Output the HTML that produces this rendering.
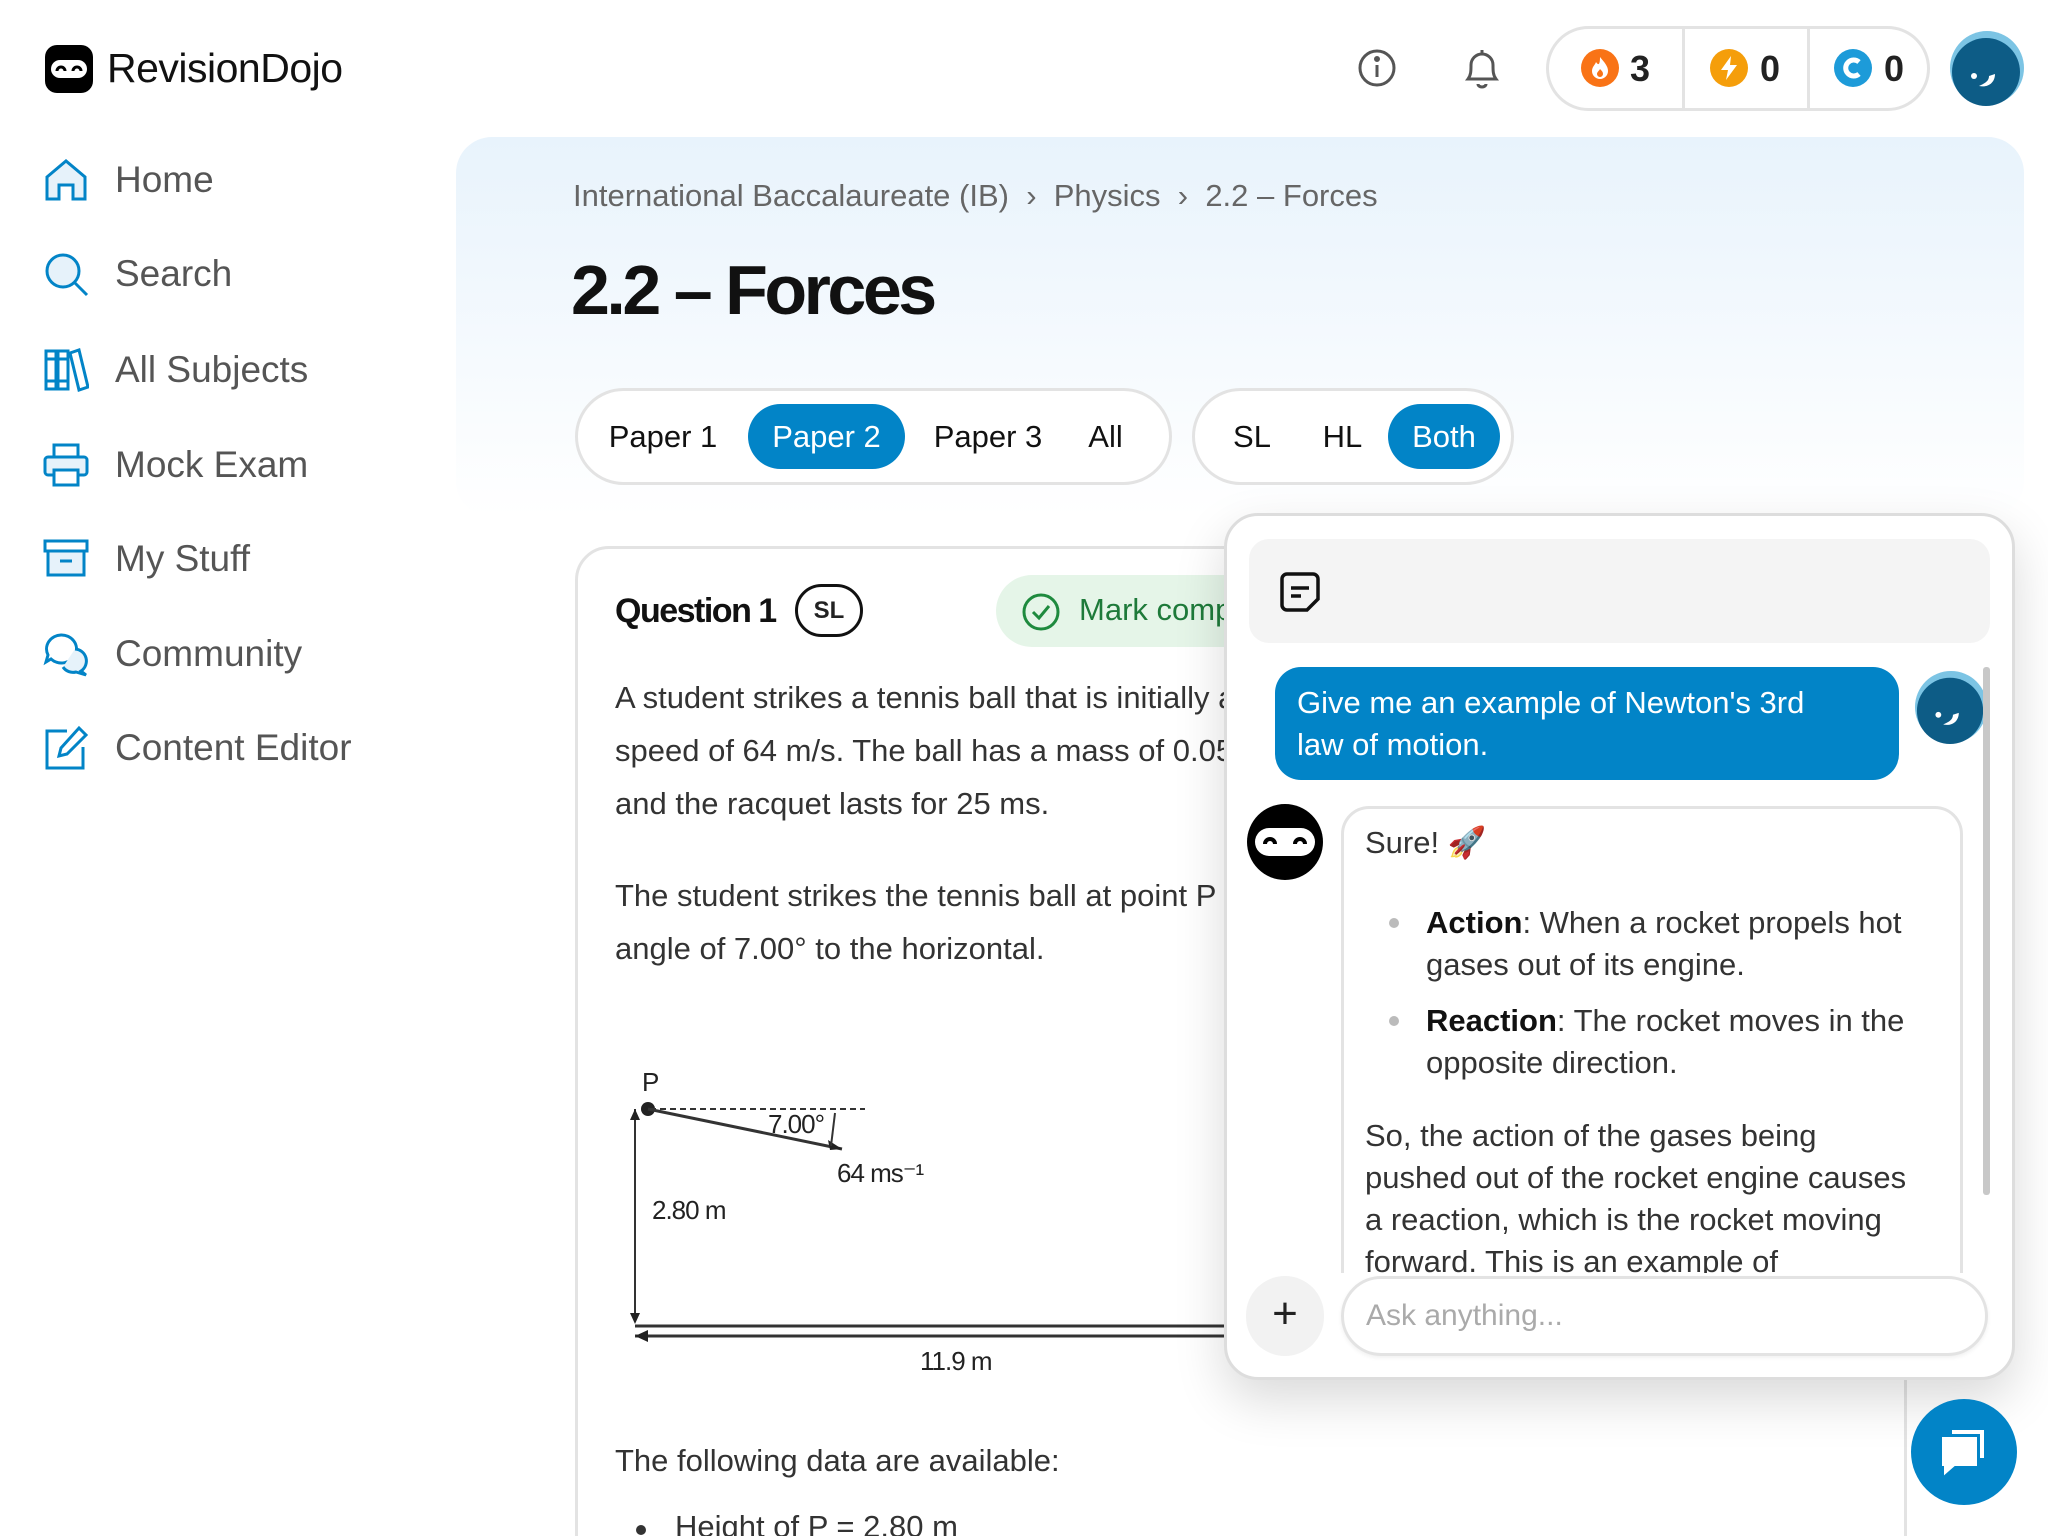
<!DOCTYPE html>
<html><head><meta charset="utf-8"><style>
*{box-sizing:border-box;margin:0;padding:0}
html,body{width:2048px;height:1536px;overflow:hidden;background:#fff}
body{font-family:"Liberation Sans",sans-serif;color:#222}
#w{position:relative;width:2048px;height:1536px;overflow:hidden}
.a{position:absolute}
.nav{position:absolute;left:43px;display:flex;align-items:center;font-size:37px;color:#555}
.nav svg{width:46px;height:46px;margin-right:26px}
.pill{position:absolute;border:3px solid #e3e3e3;border-radius:60px;background:#fff}
.opt{position:absolute;top:13px;height:65px;line-height:65px;font-size:31px;color:#111;text-align:center;border-radius:40px}
.on{background:#0284c7;color:#fff}
.p{position:absolute;left:615px;font-size:31px;color:#333;line-height:53px;white-space:nowrap}
.ct{position:absolute;left:1365px;font-size:31px;color:#333;line-height:42px;white-space:nowrap}
</style></head><body><div id="w">
<svg class="a" style="left:45px;top:45px" width="48" height="48" viewBox="0 0 48 48"><rect x="0" y="0" width="48" height="48" rx="12" fill="#000"/><rect x="6" y="15" width="36" height="18" rx="9" fill="#fff"/><path d="M12 26 a4 4 0 0 1 8 0 M28 26 a4 4 0 0 1 8 0" stroke="#000" stroke-width="3" fill="none"/></svg>
<div class="a" style="left:107px;top:45px;font-size:41px;color:#111;letter-spacing:-0.5px">RevisionDojo</div>
<div class="nav" style="top:157px"><svg viewBox="0 0 46 46" fill="none" stroke="#0284c7" stroke-width="3"><path d="M4 20 L23 4 L42 20 V42 H30 V28 H16 V42 H4Z" fill="#e6f2fa"/></svg>Home</div>
<div class="nav" style="top:251px"><svg viewBox="0 0 46 46" fill="none" stroke="#0284c7" stroke-width="3"><circle cx="20" cy="20" r="16" fill="#e6f2fa"/><path d="M32 32 L44 44"/></svg>Search</div>
<div class="nav" style="top:347px"><svg viewBox="0 0 46 46" fill="none" stroke="#0284c7" stroke-width="3"><rect x="3" y="4" width="10" height="38"/><rect x="15" y="4" width="10" height="38"/><path d="M27 6 L36 3 L45 40 L36 43Z"/><path d="M3 12H13M15 12H25M3 34H13M15 34H25"/></svg>All Subjects</div>
<div class="nav" style="top:442px"><svg viewBox="0 0 46 46" fill="none" stroke="#0284c7" stroke-width="3"><rect x="11" y="3" width="24" height="12"/><rect x="2" y="15" width="42" height="18" rx="3" fill="#e6f2fa"/><rect x="11" y="28" width="24" height="15" fill="#fff"/></svg>Mock Exam</div>
<div class="nav" style="top:536px"><svg viewBox="0 0 46 46" fill="none" stroke="#0284c7" stroke-width="3"><rect x="2" y="5" width="42" height="10"/><rect x="5" y="15" width="36" height="24" fill="#e6f2fa"/><path d="M17 25H29"/></svg>My Stuff</div>
<div class="nav" style="top:631px"><svg viewBox="0 0 46 46" fill="none" stroke="#0284c7" stroke-width="3"><path d="M18 4 a15 14 0 1 1 -10 24 L3 31 L5 24 A15 14 0 0 1 18 4Z"/><path d="M32 18 a12 12 0 0 1 6 22 L43 44 L33 41 A12 12 0 0 1 20 36" fill="#e6f2fa"/></svg>Community</div>
<div class="nav" style="top:725px"><svg viewBox="0 0 46 46" fill="none" stroke="#0284c7" stroke-width="3"><path d="M24 6H4V43H40V22"/><path d="M36 3 L43 10 L24 29 L16 31 L18 23Z"/></svg>Content Editor</div>
<svg class="a" style="left:1357px;top:48px" width="40" height="40" viewBox="0 0 40 40" fill="none" stroke="#555" stroke-width="3"><circle cx="20" cy="20" r="17"/><path d="M20 17V29"/><circle cx="20" cy="11" r="1.5" fill="#555"/></svg>
<svg class="a" style="left:1462px;top:46px" width="40" height="44" viewBox="0 0 40 44" fill="none" stroke="#555" stroke-width="3"><path d="M6 33 C9 29 9 25 9 19 A11 11 0 0 1 31 19 C31 25 31 29 34 33Z"/><path d="M16 38 a4 3 0 0 0 8 0"/><path d="M20 4V7"/></svg>
<div class="pill" style="left:1546px;top:26px;width:384px;height:85px"></div>
<div class="a" style="left:1682px;top:29px;width:3px;height:79px;background:#e3e3e3"></div>
<div class="a" style="left:1807px;top:29px;width:3px;height:79px;background:#e3e3e3"></div>
<svg class="a" style="left:1581px;top:49px" width="38" height="38" viewBox="0 0 38 38"><circle cx="19" cy="19" r="19" fill="#f97316"/><path d="M19 8 C23 13 27 17 27 22 A8 8 0 0 1 11 22 C11 18 14 16 15 13 C17 16 19 17 19 8Z" fill="#fff"/><path d="M19 20 C21 22 22 23 22 25 A3 3 0 0 1 16 25 C16 23 18 22 19 20Z" fill="#f97316"/></svg>
<div class="a" style="left:1630px;top:48px;font-size:36px;font-weight:bold">3</div>
<svg class="a" style="left:1710px;top:49px" width="38" height="38" viewBox="0 0 38 38"><circle cx="19" cy="19" r="19" fill="#f59e0b"/><path d="M21 7 L11 21 H18 L16 31 L27 16 H20Z" fill="#fff"/></svg>
<div class="a" style="left:1760px;top:48px;font-size:36px;font-weight:bold">0</div>
<svg class="a" style="left:1834px;top:49px" width="38" height="38" viewBox="0 0 38 38"><circle cx="19" cy="19" r="19" fill="#1d9bd9"/><path d="M25 13 A8 8 0 1 0 25 25" stroke="#fff" stroke-width="5" fill="none"/></svg>
<div class="a" style="left:1884px;top:48px;font-size:36px;font-weight:bold">0</div>
<svg class="a" style="left:1949px;top:30px" width="76" height="76" viewBox="0 0 76 76"><circle cx="38" cy="38" r="37" fill="#7cc4e4"/><circle cx="37" cy="42" r="34" fill="#0d5c86"/><circle cx="25" cy="46" r="3" fill="#fff"/><path d="M30 56 C40 58 46 52 46 44 L40 46 C40 52 34 54 30 56Z" fill="#fff"/></svg>
<div class="a" style="left:456px;top:137px;width:1568px;height:380px;border-radius:36px;background:linear-gradient(#e8f3fc,#ffffff)"></div>
<div class="a" style="left:573px;top:178px;font-size:31px;color:#666">International Baccalaureate (IB) &nbsp;›&nbsp; Physics &nbsp;›&nbsp; 2.2 – Forces</div>
<div class="a" style="left:571px;top:250px;font-size:70px;font-weight:bold;color:#111;letter-spacing:-3.5px">2.2 – Forces</div>
<div class="pill" style="left:575px;top:388px;width:597px;height:97px">
<div class="opt" style="left:20px;width:130px">Paper 1</div>
<div class="opt on" style="left:170px;width:157px">Paper 2</div>
<div class="opt" style="left:345px;width:130px">Paper 3</div>
<div class="opt" style="left:490px;width:75px">All</div></div>
<div class="pill" style="left:1192px;top:388px;width:322px;height:97px">
<div class="opt" style="left:22px;width:70px">SL</div>
<div class="opt" style="left:110px;width:75px">HL</div>
<div class="opt on" style="left:193px;width:112px">Both</div></div>
<div class="a" style="left:575px;top:546px;width:1332px;height:1040px;border:3px solid #e3e3e3;border-radius:34px"></div>
<div class="a" style="left:615px;top:592px;font-size:34px;font-weight:bold;color:#111;letter-spacing:-1.5px">Question 1</div>
<div class="a" style="left:795px;top:584px;width:68px;height:53px;border:3px solid #111;border-radius:30px;font-size:24px;font-weight:bold;text-align:center;line-height:47px">SL</div>
<div class="a" style="left:996px;top:575px;width:300px;height:72px;background:#e5f5e8;border-radius:40px"></div>
<svg class="a" style="left:1021px;top:592px" width="40" height="40" viewBox="0 0 40 40" fill="none" stroke="#1e8a3e" stroke-width="3"><circle cx="20" cy="20" r="17"/><path d="M12 20 L18 26 L28 14"/></svg>
<div class="a" style="left:1079px;top:592px;font-size:31px;color:#1e7a3a">Mark complete</div>
<div class="p" style="top:671px">A student strikes a tennis ball that is initially at rest</div>
<div class="p" style="top:724px">speed of 64 m/s. The ball has a mass of 0.058 kg</div>
<div class="p" style="top:777px">and the racquet lasts for 25 ms.</div>
<div class="p" style="top:869px">The student strikes the tennis ball at point P at an</div>
<div class="p" style="top:922px">angle of 7.00° to the horizontal.</div>
<svg class="a" style="left:620px;top:1060px" width="620" height="330" viewBox="0 0 620 330" font-family="Liberation Sans" fill="#222">
<text x="22" y="31" font-size="26">P</text>
<circle cx="28" cy="49" r="7"/>
<path d="M30 49 H245" stroke="#333" stroke-width="2" stroke-dasharray="6 4"/>
<path d="M28 49 L222 89" stroke="#333" stroke-width="3"/><path d="M222 89 L208 80 L210 90Z"/>
<path d="M215 53 L211 86" stroke="#333" stroke-width="2"/>
<text x="148" y="73" font-size="26" letter-spacing="-1">7.00°</text>
<text x="217" y="122" font-size="26" letter-spacing="-1">64 ms⁻¹</text>
<path d="M15 49 V262" stroke="#333" stroke-width="2"/><path d="M15 49 L10 60 H20Z M15 264 L10 253 H20Z"/>
<text x="32" y="159" font-size="26" letter-spacing="-1">2.80 m</text>
<path d="M15 266 H620 M15 276 H620" stroke="#333" stroke-width="3"/><path d="M15 276 L28 270 V282Z"/>
<text x="300" y="310" font-size="26" letter-spacing="-1">11.9 m</text></svg>
<div class="p" style="top:1434px">The following data are available:</div>
<div class="p" style="top:1500px;left:675px">Height of P = 2.80 m</div>
<div class="a" style="left:636px;top:1525px;width:10px;height:10px;border-radius:5px;background:#333"></div>
<div class="a" style="left:1224px;top:513px;width:791px;height:867px;background:#fff;border:3px solid #ddd;border-radius:34px;box-shadow:0 20px 50px rgba(0,0,0,.15)"></div>
<div class="a" style="left:1249px;top:539px;width:741px;height:104px;background:#f4f4f4;border-radius:20px"></div>
<svg class="a" style="left:1279px;top:571px" width="42" height="42" viewBox="0 0 42 42" fill="none" stroke="#111" stroke-width="3.5"><path d="M8 3H34A5 5 0 0 1 39 8V28L28 39H8A5 5 0 0 1 3 34V8A5 5 0 0 1 8 3Z"/><path d="M12 17H30M12 25H22"/></svg>
<div class="a" style="left:1275px;top:667px;width:624px;height:113px;background:#0284c7;border-radius:26px"></div>
<div class="a" style="left:1297px;top:682px;font-size:31px;color:#fff;line-height:42px">Give me an example of Newton's 3rd<br>law of motion.</div>
<svg class="a" style="left:1914px;top:670px" width="74" height="74" viewBox="0 0 76 76"><circle cx="38" cy="38" r="37" fill="#7cc4e4"/><circle cx="37" cy="42" r="34" fill="#0d5c86"/><circle cx="25" cy="46" r="3" fill="#fff"/><path d="M30 56 C40 58 46 52 46 44 L40 46 C40 52 34 54 30 56Z" fill="#fff"/></svg>
<div class="a" style="left:1983px;top:667px;width:7px;height:528px;background:#c8c8c8;border-radius:3px"></div>
<svg class="a" style="left:1247px;top:804px" width="76" height="76" viewBox="0 0 76 76"><circle cx="38" cy="38" r="38" fill="#000"/><rect x="8" y="24" width="60" height="28" rx="14" fill="#fff"/><path d="M18 40 a5 5 0 0 1 10 0 M48 40 a5 5 0 0 1 10 0" stroke="#000" stroke-width="4" fill="none"/></svg>
<div class="a" style="left:1341px;top:806px;width:622px;height:480px;border:3px solid #e3e3e3;border-bottom:none;border-radius:28px 28px 0 0"></div>
<div class="a" style="left:1341px;top:1273px;width:650px;height:20px;background:#fff"></div>
<div class="ct" style="top:822px">Sure! 🚀</div>
<div class="ct" style="left:1426px;top:902px"><b style="color:#111">Action</b>: When a rocket propels hot<br>gases out of its engine.</div>
<div class="ct" style="left:1426px;top:1000px"><b style="color:#111">Reaction</b>: The rocket moves in the<br>opposite direction.</div>
<div class="a" style="left:1389px;top:918px;width:10px;height:10px;border-radius:5px;background:#bbb"></div>
<div class="a" style="left:1389px;top:1016px;width:10px;height:10px;border-radius:5px;background:#bbb"></div>
<div class="ct" style="top:1115px;height:158px;overflow:hidden">So, the action of the gases being<br>pushed out of the rocket engine causes<br>a reaction, which is the rocket moving<br>forward. This is an example of</div>
<div class="a" style="left:1246px;top:1276px;width:78px;height:80px;border-radius:40px;background:#f2f2f2;font-size:44px;text-align:center;line-height:76px;color:#222">+</div>
<div class="a" style="left:1341px;top:1276px;width:647px;height:80px;border:3px solid #e3e3e3;border-radius:40px;box-shadow:0 2px 4px rgba(0,0,0,.06);font-size:30px;color:#aaa;line-height:74px;padding-left:22px">Ask anything...</div>
<div class="a" style="left:1911px;top:1399px;width:106px;height:106px;border-radius:53px;background:#0284c7"></div>
<svg class="a" style="left:1938px;top:1424px" width="52" height="52" viewBox="0 0 52 52" fill="none" stroke="#fff" stroke-width="4"><path d="M14 8H44V34"/><path d="M6 15H37V40H16L8 47V40H6Z" fill="#fff"/></svg>
</div></body></html>
